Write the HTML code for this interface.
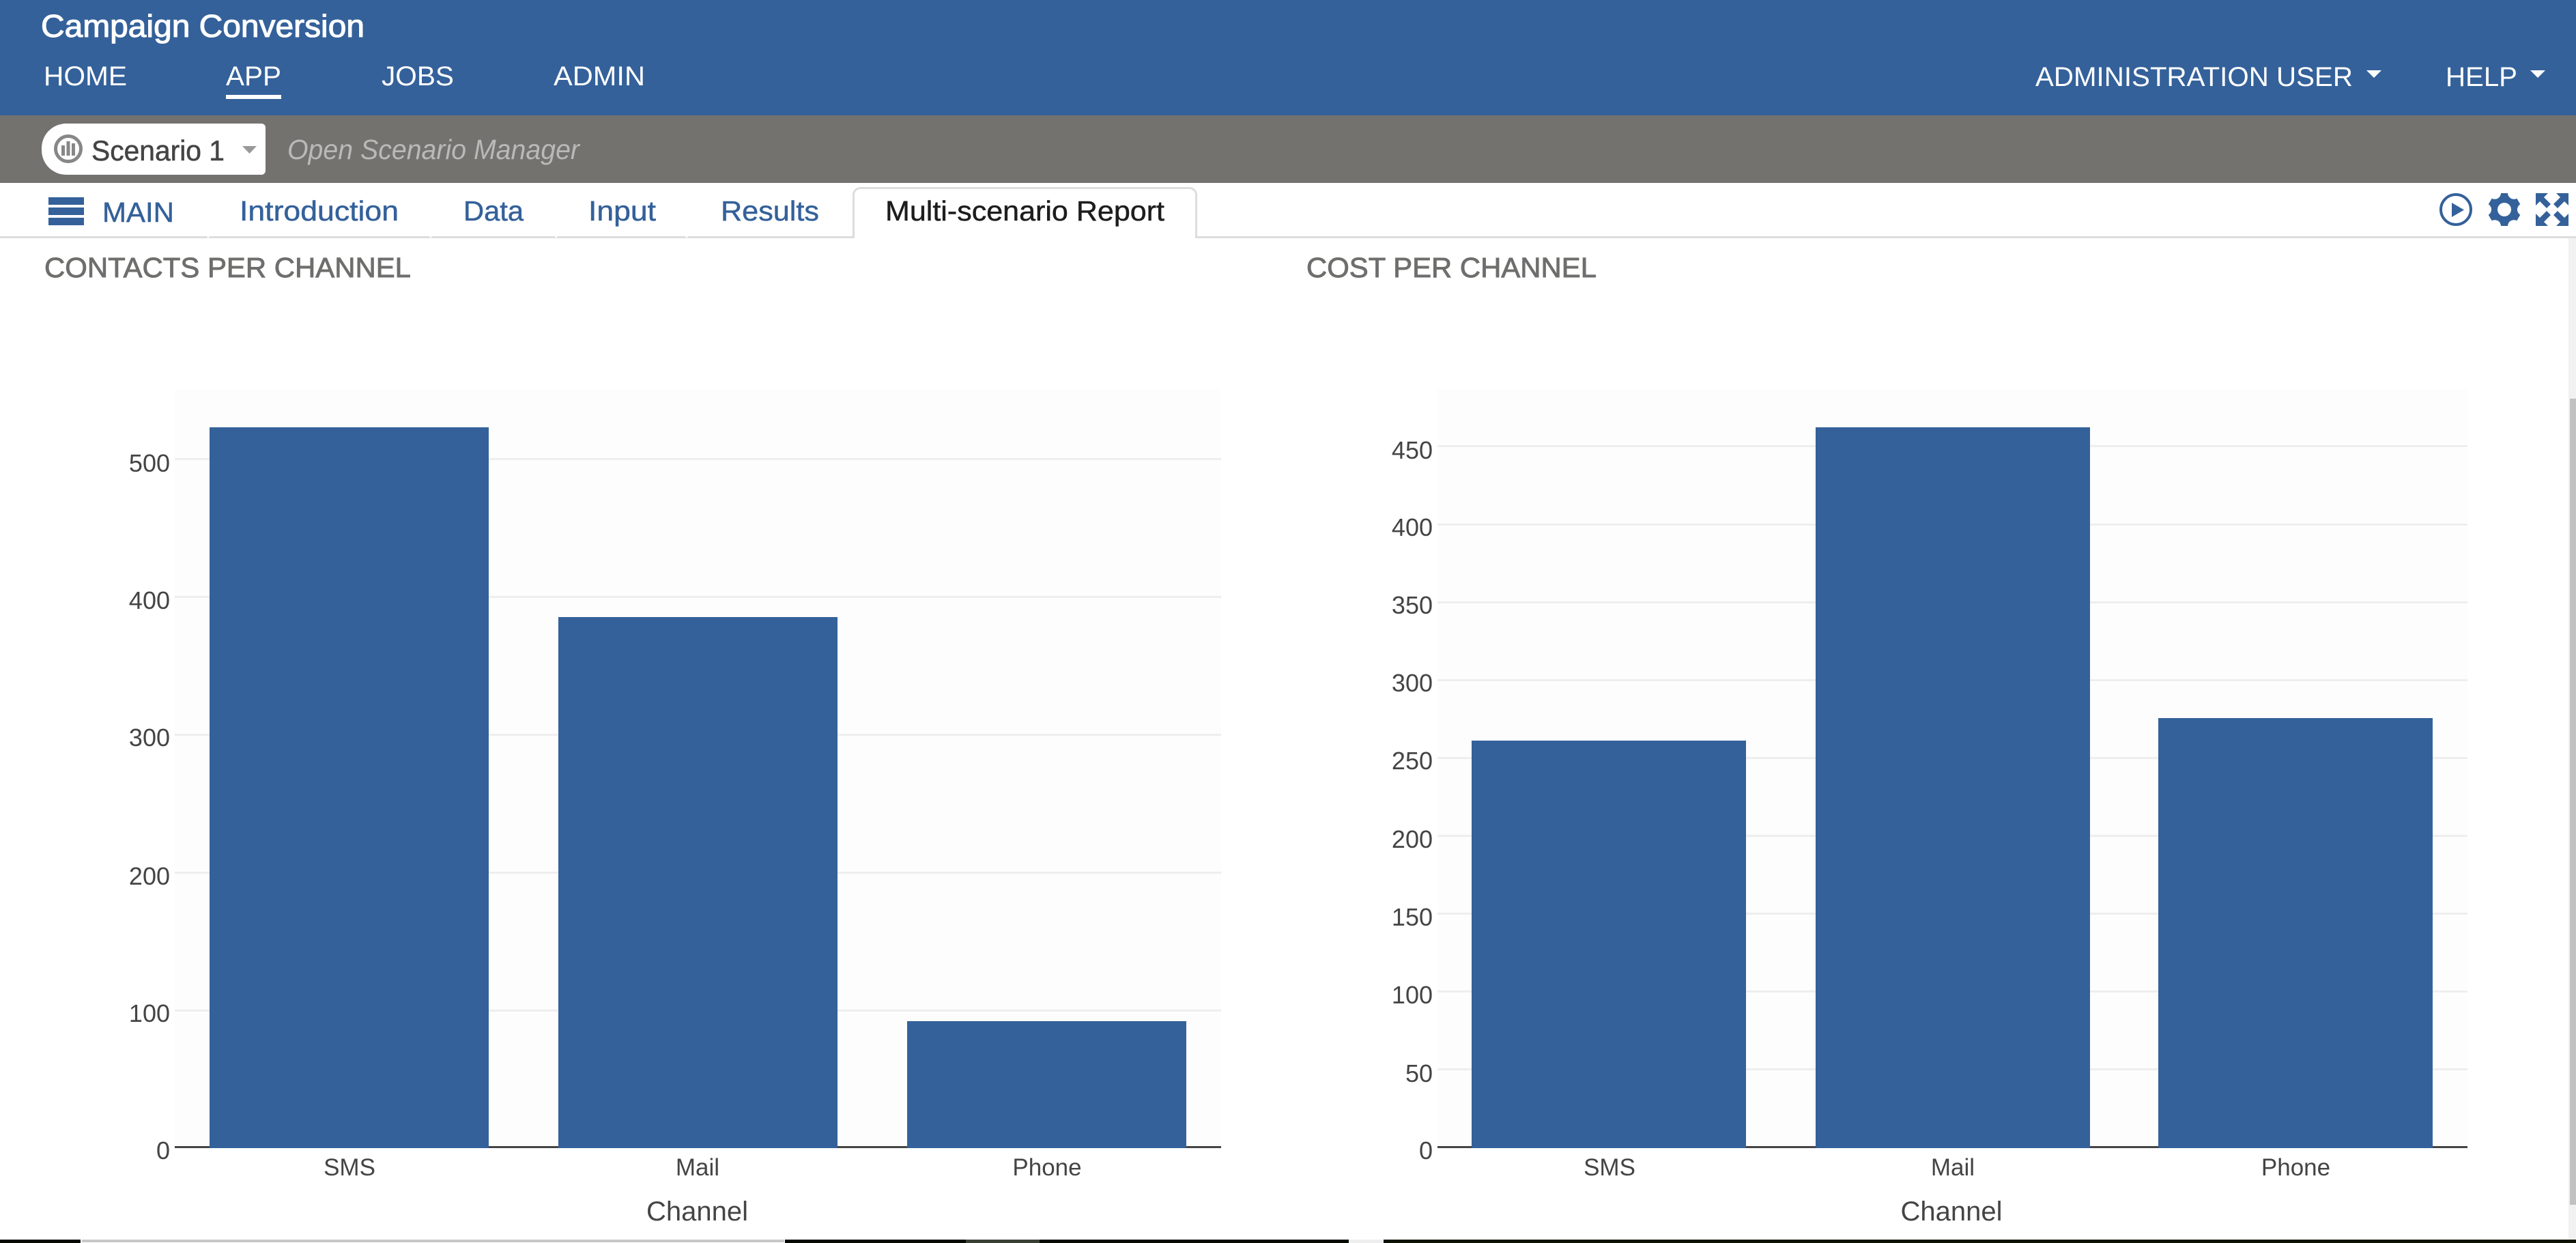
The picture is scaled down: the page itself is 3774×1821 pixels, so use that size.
<!DOCTYPE html>
<html><head><meta charset="utf-8"><title>Campaign Conversion</title>
<style>
html,body{margin:0;padding:0;background:#fff;width:3774px;height:1821px;overflow:hidden}
svg{display:block}
text{font-family:"Liberation Sans",sans-serif}
</style></head><body>
<svg xmlns="http://www.w3.org/2000/svg" width="3774" height="1821" viewBox="0 0 3774 1821">
<rect width="3774" height="1821" fill="#fff"/>
<rect width="3774" height="169" fill="#34619a"/>
<rect y="169" width="3774" height="99" fill="#73726f"/>
<g fill="#fff" font-size="40">
<text x="60" y="54" font-size="46" stroke="#fff" stroke-width="1.1" textLength="474" lengthAdjust="spacingAndGlyphs">Campaign Conversion</text>
<text x="64" y="125" textLength="122" lengthAdjust="spacingAndGlyphs">HOME</text>
<text x="331" y="125" textLength="81" lengthAdjust="spacingAndGlyphs">APP</text>
<text x="559" y="125" textLength="106" lengthAdjust="spacingAndGlyphs">JOBS</text>
<text x="811" y="125" textLength="134" lengthAdjust="spacingAndGlyphs">ADMIN</text>
<rect x="331" y="139" width="81" height="6"/>
<text x="2982" y="126" textLength="465" lengthAdjust="spacingAndGlyphs">ADMINISTRATION USER</text>
<path d="M3467 103h22l-11 11z"/>
<text x="3583" y="126" textLength="105" lengthAdjust="spacingAndGlyphs">HELP</text>
<path d="M3707 103h22l-11 11z"/>
</g>
<path d="M97 181H383a6 6 0 0 1 6 6V250a6 6 0 0 1-6 6H97A36 36 0 0 1 61 220V217A36 36 0 0 1 97 181Z" fill="#fff"/>
<circle cx="100" cy="218" r="18.5" fill="none" stroke="#878787" stroke-width="5"/>
<g fill="#878787"><rect x="90" y="213" width="5" height="15"/><rect x="97.5" y="207" width="5" height="21"/><rect x="105" y="210" width="5" height="18"/></g>
<text x="134" y="235" font-size="42" fill="#444" stroke="#444" stroke-width=".6" textLength="195" lengthAdjust="spacingAndGlyphs">Scenario 1</text>
<path d="M355 214h21l-10.500 11z" fill="#999"/>
<text x="421" y="233" font-size="41" font-style="italic" fill="#b9b9b7" textLength="428" lengthAdjust="spacingAndGlyphs">Open Scenario Manager</text>
<rect y="346" width="3774" height="3" fill="#ddd"/>
<g fill="#fff"><path d="M303 346h4l-2 3zM629 346h4l-2 3zM813 346h4l-2 3zM1004 346h4l-2 3z"/></g>
<path d="M1250.500 349V286a10 10 0 0 1 10-10.500H1742.500a10 10 0 0 1 10 10.500V349" fill="#fff" stroke="#ddd" stroke-width="3"/>
<rect x="1252" y="345" width="499" height="5" fill="#fff"/>
<g fill="#34619a">
<rect x="71" y="289" width="52" height="11"/><rect x="71" y="304" width="52" height="11"/><rect x="71" y="319" width="52" height="11"/>
<g font-size="41" stroke="#34619a" stroke-width=".5">
<text x="150" y="325" textLength="105" lengthAdjust="spacingAndGlyphs">MAIN</text>
<text x="351" y="323" textLength="233" lengthAdjust="spacingAndGlyphs">Introduction</text>
<text x="679" y="323" textLength="88" lengthAdjust="spacingAndGlyphs">Data</text>
<text x="862" y="323" textLength="99" lengthAdjust="spacingAndGlyphs">Input</text>
<text x="1056" y="323" textLength="144" lengthAdjust="spacingAndGlyphs">Results</text>
</g>
<circle cx="3598" cy="307" r="22" fill="none" stroke="#34619a" stroke-width="4"/>
<path d="M3592 297l18 10.500-18 10.500z"/>
<path transform="translate(3669 307)" fill-rule="evenodd" d="M-5-24L5-24A9 9 0 0 0 18.300-16.300L23.300-7.700A9 9 0 0 0 23.300 7.700L18.300 16.300A9 9 0 0 0 5 24L-5 24A9 9 0 0 0-18.300 16.300L-23.300 7.700A9 9 0 0 0-23.300-7.700L-18.300-16.300A9 9 0 0 0-5-24ZM-10 0A10 10 0 1 0 10 0A10 10 0 1 0-10 0Z"/>
<g transform="translate(3715 283)">
<path d="M0 0H18L12 6L22 16L16 22L6 12L0 18Z"/>
<path d="M48 0H30L36 6L26 16L32 22L42 12L48 18Z"/>
<path d="M0 48H18L12 42L22 32L16 26L6 36L0 30Z"/>
<path d="M48 48H30L36 42L26 32L32 26L42 36L48 30Z"/>
</g>
</g>
<text x="1297" y="323" font-size="41" fill="#1d1d1d" stroke="#1d1d1d" stroke-width=".5" textLength="409" lengthAdjust="spacingAndGlyphs">Multi-scenario Report</text>
<g font-size="41" fill="#6e6e6c" stroke="#6e6e6c" stroke-width=".9">
<text x="65" y="406" textLength="537" lengthAdjust="spacingAndGlyphs">CONTACTS PER CHANNEL</text>
<text x="1914" y="406" textLength="425" lengthAdjust="spacingAndGlyphs">COST PER CHANNEL</text>
</g>
<!-- left chart -->
<rect x="256" y="570" width="1533" height="1110" fill="#fdfdfd"/>
<g fill="#eee">
<rect x="256" y="671" width="1533" height="3"/><rect x="256" y="873" width="1533" height="3"/><rect x="256" y="1075" width="1533" height="3"/><rect x="256" y="1277" width="1533" height="3"/><rect x="256" y="1479" width="1533" height="3"/>
</g>
<rect x="256" y="1679" width="1533" height="3" fill="#444"/>
<g fill="#34619a">
<rect x="307" y="626" width="409" height="1056"/><rect x="818" y="904" width="409" height="778"/><rect x="1329" y="1496" width="409" height="186"/>
</g>
<g font-size="36" fill="#444" text-anchor="end">
<text x="249" y="691">500</text><text x="249" y="892">400</text><text x="249" y="1093">300</text><text x="249" y="1296">200</text><text x="249" y="1497">100</text><text x="249" y="1698">0</text>
</g>
<g font-size="35" fill="#444" text-anchor="middle">
<text x="512" y="1722">SMS</text><text x="1022" y="1722">Mail</text><text x="1534" y="1722">Phone</text>
<text x="1021.500" y="1788" font-size="40">Channel</text>
</g>
<!-- right chart -->
<rect x="2106" y="570" width="1509" height="1110" fill="#fdfdfd"/>
<g fill="#eee">
<rect x="2106" y="652" width="1509" height="3"/><rect x="2106" y="767" width="1509" height="3"/><rect x="2106" y="881" width="1509" height="3"/><rect x="2106" y="995" width="1509" height="3"/><rect x="2106" y="1109" width="1509" height="3"/><rect x="2106" y="1223" width="1509" height="3"/><rect x="2106" y="1337" width="1509" height="3"/><rect x="2106" y="1451" width="1509" height="3"/><rect x="2106" y="1565" width="1509" height="3"/>
</g>
<rect x="2106" y="1679" width="1509" height="3" fill="#444"/>
<g fill="#34619a">
<rect x="2156" y="1085" width="402" height="597"/><rect x="2660" y="626" width="402" height="1056"/><rect x="3162" y="1052" width="402" height="630"/>
</g>
<g font-size="36" fill="#444" text-anchor="end">
<text x="2099" y="672">450</text><text x="2099" y="785">400</text><text x="2099" y="899">350</text><text x="2099" y="1013">300</text><text x="2099" y="1127">250</text><text x="2099" y="1242">200</text><text x="2099" y="1356">150</text><text x="2099" y="1470">100</text><text x="2099" y="1585">50</text><text x="2099" y="1698">0</text>
</g>
<g font-size="35" fill="#444" text-anchor="middle">
<text x="2358" y="1722">SMS</text><text x="2861" y="1722">Mail</text><text x="3363.500" y="1722">Phone</text>
<text x="2859" y="1788" font-size="40">Channel</text>
</g>
<!-- scrollbar -->
<rect x="3763" y="349" width="11" height="1467" fill="#f1f1f1"/>
<rect x="3765" y="584" width="9" height="1181" fill="#c1c1c1"/>
<!-- bottom strip -->
<rect x="0" y="1816" width="118" height="5" fill="#050a00"/>
<rect x="120" y="1816" width="1029" height="4" fill="#c8c8c8"/>
<rect x="1150" y="1816" width="265" height="5" fill="#050a00"/>
<rect x="1415" y="1816" width="108" height="5" fill="#3a3f33"/>
<rect x="1523" y="1816" width="453" height="5" fill="#050a00"/>
<rect x="1976" y="1816" width="51" height="5" fill="#eee"/>
<rect x="2027" y="1816" width="1747" height="5" fill="#0e1200"/>
</svg>
</body></html>
